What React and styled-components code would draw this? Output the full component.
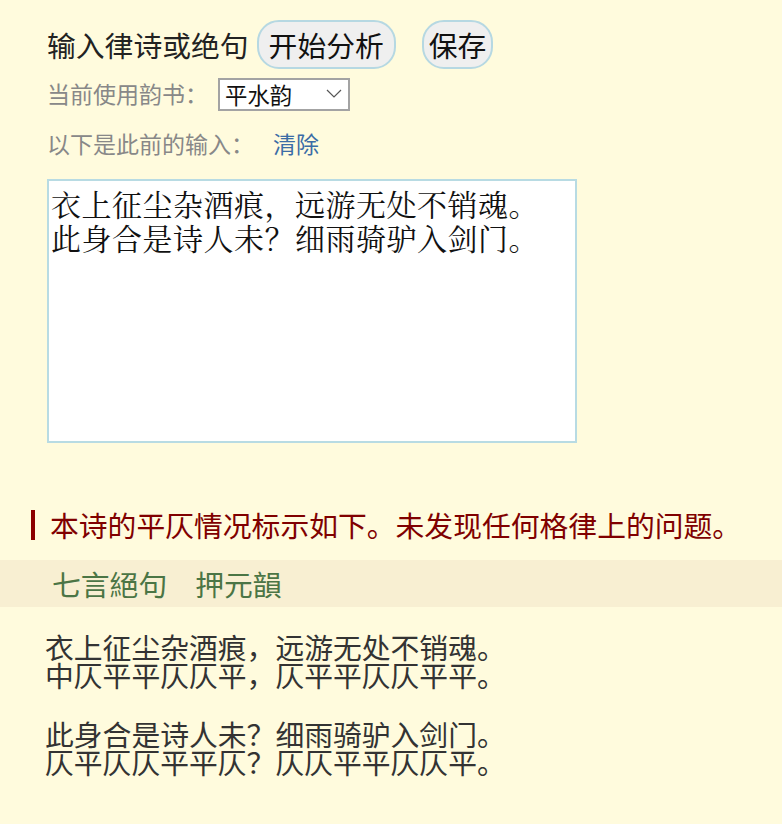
import React from "react";
import styled, { createGlobalStyle } from "styled-components";

const Global = createGlobalStyle`
  html, body { margin: 0; padding: 0; background: #fffbdd; }
  body { font-family: "Noto Sans CJK SC", "Noto Sans", sans-serif; }
`;

const Page = styled.div`
  width: 782px;
  min-height: 824px;
  background: #fffbdd;
  padding-top: 20px;
  box-sizing: border-box;
`;

const Form = styled.div`
  padding-left: 47px;
  display: flex;
  flex-direction: column;
`;

const TitleRow = styled.div`
  display: flex;
  align-items: center;
  height: 49px;
`;

const Title = styled.span`
  font-size: 28.8px;
  color: #222;
  margin-right: 8px;
`;

const PillButton = styled.button`
  font-family: "Noto Sans CJK SC", sans-serif;
  font-size: 28.8px;
  line-height: 35px;
  height: 49px;
  padding: 0 ${(p) => p.$pad}px;
  margin-right: ${(p) => p.$gap}px;
  background: #efefef;
  border: 2px solid #b6d8e2;
  border-radius: 22px;
  color: #111;
  cursor: pointer;
`;

const SubRow = styled.div`
  display: flex;
  align-items: center;
  margin-top: ${(p) => p.$top}px;
  font-size: 23px;
  color: #888;
`;

const SelectWrap = styled.div`
  position: relative;
  width: 132px;
  height: 33px;
  margin-left: 10px;
`;

const Select = styled.select`
  appearance: none;
  -webkit-appearance: none;
  width: 100%;
  height: 100%;
  box-sizing: border-box;
  border: 2px solid #a3a3a3;
  border-radius: 0;
  background: #fff;
  font-family: "Noto Sans CJK SC", sans-serif;
  font-size: 22.4px;
  color: #111;
  padding: 0 0 0 5px;
  line-height: 29px;
`;

const Chevron = styled.svg`
  position: absolute;
  right: 8px;
  top: 12px;
  pointer-events: none;
`;

const ClearLink = styled.a`
  color: #3b6ca6;
  margin-left: 19px;
  text-decoration: none;
  cursor: pointer;
`;

const PoemInput = styled.textarea`
  margin-top: 19px;
  width: 530px;
  height: 264px;
  box-sizing: border-box;
  border: 2px solid #b8dbe3;
  background: #fff;
  padding: 5px 2px;
  resize: none;
  font-family: "Noto Serif CJK SC", "Liberation Serif", "Noto Sans CJK SC", serif;
  font-size: 30px;
  line-height: 34px;
  letter-spacing: 0.5px;
  text-spacing-trim: space-all;
  color: #111;
  outline: none;
`;

const Notice = styled.div`
  margin: 67px 0 0 31px;
  border-left: 4px solid #8b0000;
  padding-left: 15px;
  font-size: 28.8px;
  line-height: 30px;
  color: #800000;
`;

const Band = styled.div`
  margin-top: 20px;
  height: 47px;
  background: #f8efd2;
  display: flex;
  align-items: center;
  padding-left: 52px;
  gap: 28px;
  font-size: 28.8px;
  color: #4b7545;
`;

const PoemBlock = styled.div`
  padding: 26px 0 0 45px;
  display: flex;
  flex-direction: column;
  gap: 31px;
`;

const Stanza = styled.div`
  font-size: 28.8px;
  line-height: 28px;
  color: #333;
  white-space: pre;
`;

const couplets = [
  ["衣上征尘杂酒痕，远游无处不销魂。", "中仄平平仄仄平，仄平平仄仄平平。"],
  ["此身合是诗人未？细雨骑驴入剑门。", "仄平仄仄平平仄？仄仄平平仄仄平。"],
];

export default function App() {
  return (
    <Page>
      <Global />
      <Form>
        <TitleRow>
          <Title>输入律诗或绝句</Title>
          <PillButton $pad={10} $gap={26}>开始分析</PillButton>
          <PillButton $pad={5} $gap={0}>保存</PillButton>
        </TitleRow>
        <SubRow $top={7}>
          当前使用韵书：
          <SelectWrap>
            <Select defaultValue="psy">
              <option value="psy">平水韵</option>
              <option value="zh">中华新韵</option>
            </Select>
            <Chevron width="16" height="9" viewBox="0 0 16 9">
              <path d="M1 1 L8 8 L15 1" fill="none" stroke="#555" strokeWidth="1.2" />
            </Chevron>
          </SelectWrap>
        </SubRow>
        <SubRow $top={16}>
          以下是此前的输入：
          <ClearLink>清除</ClearLink>
        </SubRow>
        <PoemInput
          defaultValue={"衣上征尘杂酒痕，远游无处不销魂。\n此身合是诗人未？细雨骑驴入剑门。"}
        />
      </Form>
      <Notice>本诗的平仄情况标示如下。未发现任何格律上的问题。</Notice>
      <Band>
        <span>七言絕句</span>
        <span>押元韻</span>
      </Band>
      <PoemBlock>
        {couplets.map((c, i) => (
          <Stanza key={i}>{c.join("\n")}</Stanza>
        ))}
      </PoemBlock>
    </Page>
  );
}
